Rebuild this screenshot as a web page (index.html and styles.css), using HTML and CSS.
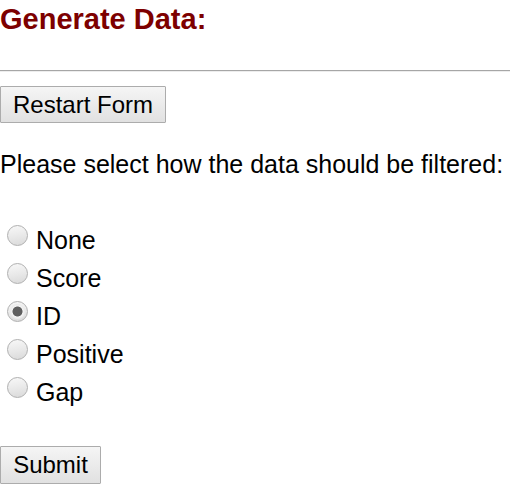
FILE: index.html
```html
<!DOCTYPE html>
<html>
<head>
<meta charset="utf-8">
<link rel="stylesheet" href="styles.css">
</head>
<body>
<h2 class="title">Generate Data:</h2>
<hr class="rule">
<button class="btn btn-restart" type="button">Restart Form</button>
<p class="prompt">Please select how the data should be filtered:</p>
<form class="options">
  <label class="option"><input class="radio" type="radio" name="f"><span>None</span></label>
  <label class="option"><input class="radio" type="radio" name="f"><span>Score</span></label>
  <label class="option"><input class="radio" type="radio" name="f" checked><span>ID</span></label>
  <label class="option"><input class="radio" type="radio" name="f"><span>Positive</span></label>
  <label class="option"><input class="radio" type="radio" name="f"><span>Gap</span></label>
</form>
<button class="btn btn-submit" type="button">Submit</button>
</body>
</html>
```
FILE: styles.css
```css
html, body {
  margin: 0;
  padding: 0;
  background: #ffffff;
}
body {
  font-family: "Liberation Sans", Arial, sans-serif;
  font-size: 25px;
  color: #000;
}
.title {
  margin: 2px 0 0 0;
  font-size: 29px;
  line-height: 34px;
  font-weight: bold;
  color: #7d0000;
}
.rule {
  margin: 34px 0 0 0;
  border: 0;
  border-top: 1px solid #a6a6a6;
  border-bottom: 1px solid #ededed;
  height: 0;
}
.btn {
  display: block;
  font-family: "Liberation Sans", Arial, sans-serif;
  font-size: 24px;
  color: #000;
  padding: 0 12px;
  border: 1px solid #acacac;
  border-radius: 1px;
  background: linear-gradient(#f5f5f5, #e1e1e1);
  box-sizing: border-box;
}
.btn-restart {
  margin-top: 14px;
  width: 166px;
  height: 37px;
}
.prompt {
  margin: 27px 0 0 0;
  line-height: 29px;
}
.options {
  margin: 42px 0 0 0;
  display: flex;
  flex-direction: column;
}
.option {
  display: flex;
  align-items: flex-start;
  height: 38px;
  line-height: 38px;
}
.radio {
  appearance: none;
  -webkit-appearance: none;
  margin: 4px 8px 0 7px;
  width: 21px;
  height: 21px;
  border-radius: 50%;
  border: 1px solid #b0b0b0;
  box-sizing: border-box;
  background: linear-gradient(170deg, #f8f8f8 0%, #e8e8e8 55%, #d9d9d9 100%);
  flex: none;
}
.radio:checked {
  background: radial-gradient(circle at center, #606060 0, #606060 4.6px, #f4f4f4 5.4px, #ececec 7px, transparent 8px),
              linear-gradient(170deg, #f8f8f8 0%, #e8e8e8 55%, #d9d9d9 100%);
}
.btn-submit {
  margin-top: 35px;
  width: 101px;
  height: 38px;
}
```
